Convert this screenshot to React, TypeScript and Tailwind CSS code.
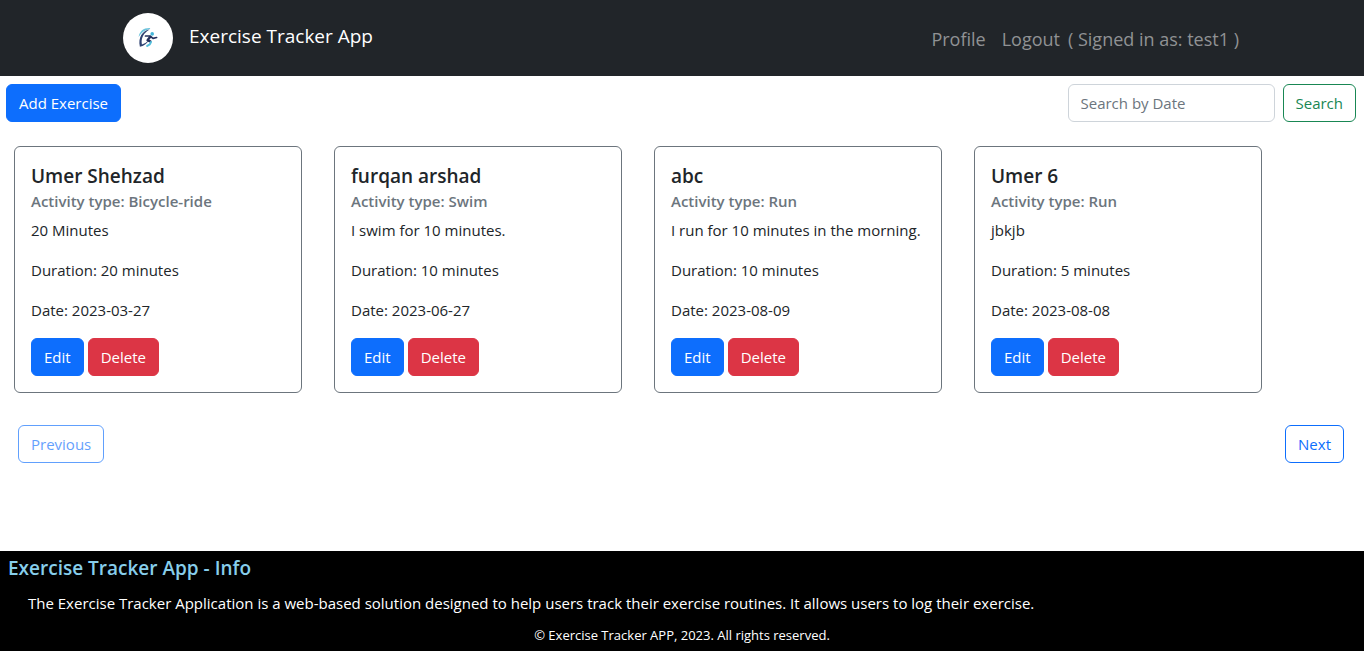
import type { ButtonHTMLAttributes } from "react";
import { clsx } from "clsx";

type Exercise = {
  name: string;
  activity: string;
  description: string;
  minutes: number;
  date: string;
};

const exercises: Exercise[] = [
  { name: "Umer Shehzad", activity: "Bicycle-ride", description: "20 Minutes", minutes: 20, date: "2023-03-27" },
  { name: "furqan arshad", activity: "Swim", description: "I swim for 10 minutes.", minutes: 10, date: "2023-06-27" },
  { name: "abc", activity: "Run", description: "I run for 10 minutes in the morning.", minutes: 10, date: "2023-08-09" },
  { name: "Umer 6", activity: "Run", description: "jbkjb", minutes: 5, date: "2023-08-08" },
];

const variants = {
  primary: "border-[#0d6efd] bg-[#0d6efd] text-white",
  danger: "border-[#dc3545] bg-[#dc3545] text-white",
  outlinePrimary: "border-[#0d6efd] text-[#0d6efd]",
  outlineSuccess: "border-[#198754] text-[#198754]",
};

type ButtonProps = ButtonHTMLAttributes<HTMLButtonElement> & { variant: keyof typeof variants };

function Button({ variant, className, ...props }: ButtonProps) {
  return (
    <button
      type="button"
      className={clsx(
        "h-[38px] shrink-0 rounded-md border px-3 text-[15px] leading-6 disabled:opacity-65",
        variants[variant],
        className,
      )}
      {...props}
    />
  );
}

function Logo() {
  return (
    <svg viewBox="0 0 50 50" className="size-[50px] shrink-0" role="img" aria-label="Exercise Tracker">
      <circle cx="25" cy="25" r="25" fill="#fff" />
      <path d="M15.600 24C16.500 18 20.500 14.700 27 14.900C27.500 15.500 27 16 26 16.200C21.500 17 18.500 19.500 15.600 24Z" fill="#6cc3dc" />
      <path
        d="M26.800 16.600C19.500 17.500 14.800 24.500 16.900 33.800C20.800 33 24 30.800 25.600 27.300C23.600 29.600 21.300 30.900 18.900 31.400C17.900 25.500 20.300 20 26.800 16.600Z"
        fill="#2f4272"
      />
      <g fill="none" strokeLinecap="round" strokeLinejoin="round">
        <path d="M22.500 23H27L30 25.300L33.600 24.500" stroke="#25305c" strokeWidth="1.700" />
        <path d="M27 24L24.600 27.300L27.300 28.300" stroke="#25305c" strokeWidth="2.400" />
        <path d="M28 29L26.800 31.400L24.200 32.900" stroke="#55bfdc" strokeWidth="2" />
      </g>
      <circle cx="29.200" cy="20.900" r="1.800" fill="#45b5d8" />
    </svg>
  );
}

function ExerciseCard({ exercise }: { exercise: Exercise }) {
  return (
    <article className="w-72 rounded-md border border-[#6c757d] p-4">
      <h5 className="text-[19px] leading-[26px] font-semibold">{exercise.name}</h5>
      <h6 className="mt-0.5 text-[15px] leading-5 font-semibold text-[#6c757d]">
        Activity type: {exercise.activity}
      </h6>
      <p className="mt-[7px] text-[15px] leading-6">{exercise.description}</p>
      <p className="mt-4 text-[15px] leading-6">Duration: {exercise.minutes} minutes</p>
      <p className="mt-4 mb-4 text-[15px] leading-6">Date: {exercise.date}</p>
      <div className="flex gap-1">
        <Button variant="primary">Edit</Button>
        <Button variant="danger">Delete</Button>
      </div>
    </article>
  );
}

export default function App() {
  return (
    <div className="flex min-h-screen flex-col bg-white font-['Open_Sans',sans-serif] text-[#212529]">
      <header className="bg-[#212529]">
        <nav className="mx-auto flex h-[76px] max-w-[1142px] items-center justify-between px-3">
          <a href="#" className="flex items-center gap-4 text-[19px] text-white">
            <Logo />
            <span className="pb-1">Exercise Tracker App</span>
          </a>
          <div className="flex gap-4 pt-0.5 pr-0.5 text-lg text-[#909294]">
            <a href="#profile">Profile</a>
            <div className="flex gap-2">
              <a href="#logout">Logout</a>
              <span>( Signed in as: test1 )</span>
            </div>
          </div>
        </nav>
      </header>

      <div className="flex justify-between pt-2 pr-2 pl-1.5">
        <Button variant="primary">Add Exercise</Button>
        <form className="flex gap-2">
          <input
            type="search"
            aria-label="Search by Date"
            placeholder="Search by Date"
            className="h-[38px] w-[207px] rounded-md border border-[#ced4da] px-3 text-[15px] placeholder:text-[#6c757d]"
          />
          <Button variant="outlineSuccess">Search</Button>
        </form>
      </div>

      <main className="flex flex-wrap gap-8 px-3.5 pt-6">
        {exercises.map((exercise) => (
          <ExerciseCard key={exercise.name} exercise={exercise} />
        ))}
      </main>

      <div className="flex justify-between pt-8 pr-5 pb-6 pl-[18px]">
        <Button variant="outlinePrimary" disabled>
          Previous
        </Button>
        <Button variant="outlinePrimary">Next</Button>
      </div>

      <footer className="mt-auto bg-black px-2 pt-1 pb-1 text-white">
        <h5 className="text-[19px] leading-[26px] font-semibold text-[#87ceeb]">Exercise Tracker App - Info</h5>
        <p className="mt-2.5 px-5 text-[15px] leading-6">
          The Exercise Tracker Application is a web-based solution designed to help users track their exercise routines.
          It allows users to log their exercise.
        </p>
        <p className="mt-2 text-center text-[13px] leading-6">© Exercise Tracker APP, 2023. All rights reserved.</p>
      </footer>
    </div>
  );
}
